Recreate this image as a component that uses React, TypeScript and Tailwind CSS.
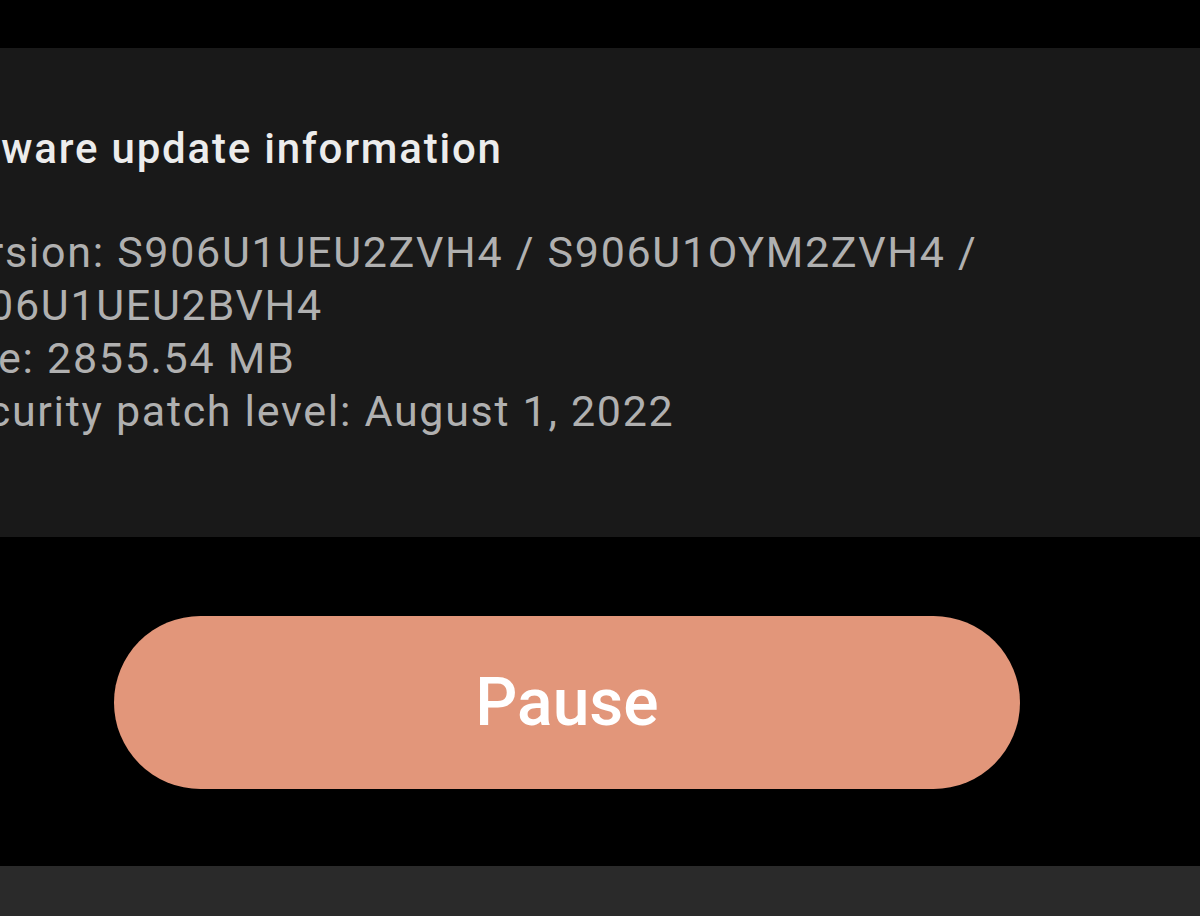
export default function App() {
  const lines = [
    "Version: S906U1UEU2ZVH4 / S906U1OYM2ZVH4 /",
    "S906U1UEU2BVH4",
    "Size: 2855.54 MB",
    "Security patch level: August 1, 2022",
  ];

  return (
    <div className="flex h-[916px] w-[1200px] flex-col overflow-hidden bg-black font-['Roboto',sans-serif]">
      <div className="h-[48px] shrink-0 bg-black" />

      <section className="h-[489px] shrink-0 bg-[#191919] pt-[75px]">
        <h1 className="-ml-[84px] text-[42px] font-medium leading-[52px] tracking-[1.8px] text-[#ececec]">
          Software update information
        </h1>
        <div className="-ml-[64px] mt-[51px] text-[43px] leading-[53px] tracking-[1.7px] text-[#b0b0b0]">
          {lines.map((line) => (
            <p key={line}>{line}</p>
          ))}
        </div>
      </section>

      <div className="flex flex-1 items-center pl-[114px]">
        <button
          type="button"
          className="mt-[2px] flex h-[173px] w-[906px] items-center justify-center rounded-full bg-[#e2967a] text-[66px] font-medium text-white"
        >
          Pause
        </button>
      </div>

      <div className="h-[50px] shrink-0 bg-[#2a2a2a]" />
    </div>
  );
}
